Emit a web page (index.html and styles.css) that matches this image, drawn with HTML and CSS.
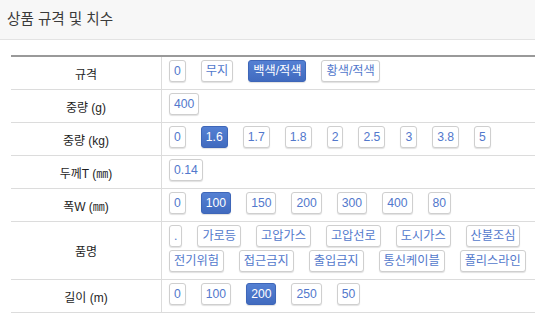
FILE: index.html
```html
<!DOCTYPE html>
<html lang="ko">
<head>
<meta charset="utf-8">
<link rel="stylesheet" href="styles.css">
</head>
<body>
<div class="title-bar"><h1 class="title">상품 규격 및 치수</h1></div>
<div class="wrap">
<table class="spec">
  <tr>
    <th>규격</th>
    <td><div class="opts"><span class="opt">0</span><span class="opt">무지</span><span class="opt on">백색/적색</span><span class="opt">황색/적색</span></div></td>
  </tr>
  <tr>
    <th>중량 (g)</th>
    <td><div class="opts"><span class="opt">400</span></div></td>
  </tr>
  <tr>
    <th>중량 (kg)</th>
    <td><div class="opts"><span class="opt">0</span><span class="opt on">1.6</span><span class="opt">1.7</span><span class="opt">1.8</span><span class="opt">2</span><span class="opt">2.5</span><span class="opt">3</span><span class="opt">3.8</span><span class="opt">5</span></div></td>
  </tr>
  <tr>
    <th>두께T (㎜)</th>
    <td><div class="opts"><span class="opt">0.14</span></div></td>
  </tr>
  <tr>
    <th>폭W (㎜)</th>
    <td><div class="opts"><span class="opt">0</span><span class="opt on">100</span><span class="opt">150</span><span class="opt">200</span><span class="opt">300</span><span class="opt">400</span><span class="opt">80</span></div></td>
  </tr>
  <tr>
    <th>품명</th>
    <td><div class="opts"><span class="opt">.</span><span class="opt">가로등</span><span class="opt">고압가스</span><span class="opt">고압선로</span><span class="opt">도시가스</span><span class="opt">산불조심</span><span class="opt">전기위험</span><span class="opt">접근금지</span><span class="opt">출입금지</span><span class="opt">통신케이블</span><span class="opt">폴리스라인</span></div></td>
  </tr>
  <tr>
    <th>길이 (m)</th>
    <td><div class="opts"><span class="opt">0</span><span class="opt">100</span><span class="opt on">200</span><span class="opt">250</span><span class="opt">50</span></div></td>
  </tr>
</table>
</div>
</body>
</html>
```
FILE: styles.css
```css
html, body {
  margin: 0;
  padding: 0;
  background: #fff;
  overflow: hidden;
}
body {
  font-family: "Liberation Sans", "Noto Sans CJK KR", sans-serif;
  color: #222;
}
.title-bar {
  height: 39px;
  background: #f7f7f7;
  border-bottom: 1px solid #e3e3e3;
  display: flex;
  align-items: center;
  padding-left: 7px;
}
.title {
  margin: 0;
  font-size: 14.6px;
  font-weight: normal;
  color: #3a3a3a;
  line-height: 1;
  padding-bottom: 1px;
}
.wrap {
  padding: 15px 0 0 11px;
}
.spec {
  width: 100%;
  border-collapse: collapse;
  border-top: 2px solid #999;
}
.spec tr {
  border-bottom: 1px solid #dcdcdc;
}
.spec th {
  width: 150px;
  font-weight: normal;
  font-size: 12px;
  color: #1e1e1e;
  text-align: center;
  vertical-align: middle;
  border-right: 1px solid #dcdcdc;
  padding: 0;
}
.spec td {
  padding: 3px 0 7px 7px;
  vertical-align: top;
}
.opts {
  display: flex;
  flex-wrap: wrap;
  column-gap: 15px;
  row-gap: 3px;
}
.opt {
  display: inline-block;
  height: 20px;
  line-height: 20px;
  padding: 0 4px;
  border: 1px solid #cfcfcf;
  border-radius: 3px;
  box-shadow: 0 1px 1px rgba(0,0,0,0.12);
  font-size: 12.2px;
  color: #5278cc;
  background: #fff;
  white-space: nowrap;
}
.opt.on {
  background: linear-gradient(#5480d3, #416bbf);
  border-color: #3e66b8;
  color: #fff;
}
```
